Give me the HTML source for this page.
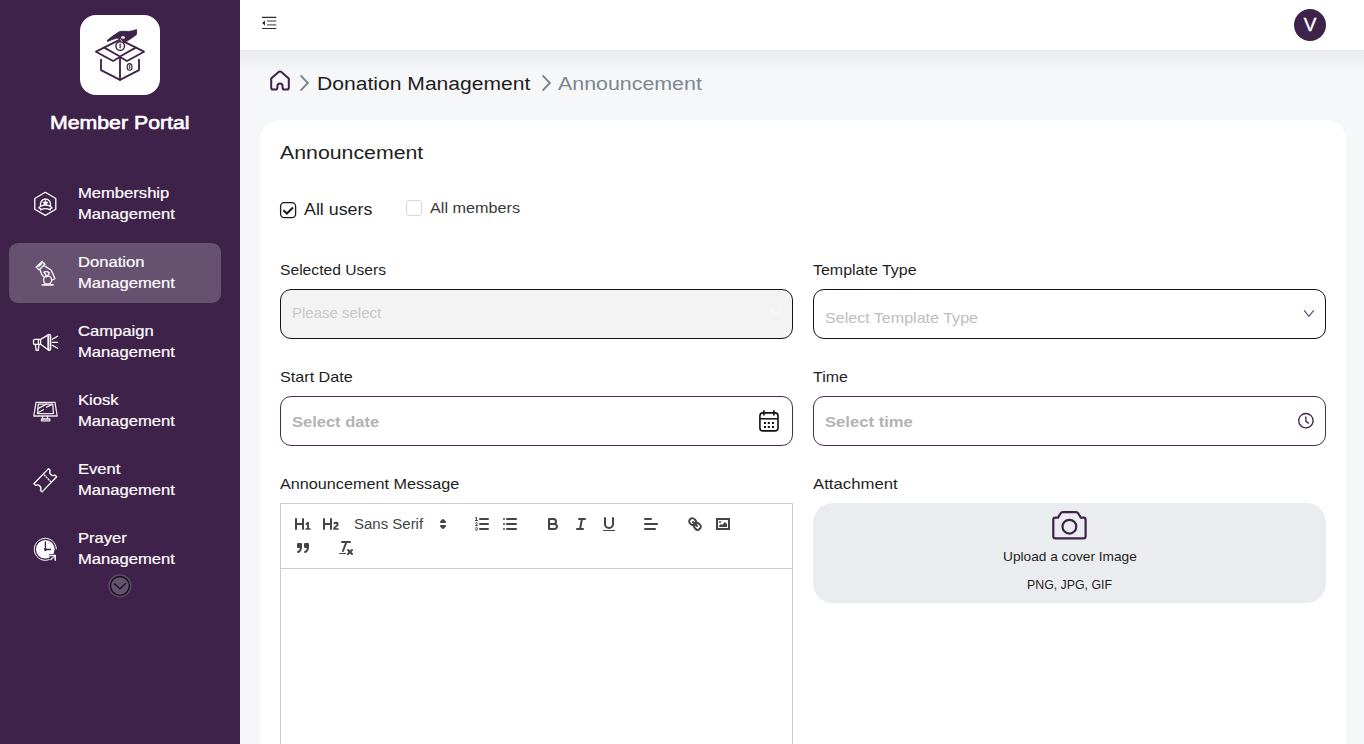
<!DOCTYPE html>
<html><head><meta charset="utf-8">
<style>
*{box-sizing:border-box;margin:0;padding:0}
html,body{width:1364px;height:744px;overflow:hidden;font-family:"Liberation Sans",sans-serif;background:#f6f7f9}
.abs{position:absolute;white-space:nowrap}
svg{position:absolute;overflow:visible}
#side{position:absolute;left:0;top:0;width:240px;height:744px;background:#3f2249}
#logo{position:absolute;left:80px;top:15px;width:80px;height:80px;background:#fff;border-radius:16px}
#brand{position:absolute;left:50px;top:112px;color:#fff;font-weight:normal;font-size:18px;line-height:22px;white-space:nowrap;transform:scaleX(1.182);transform-origin:0 0;-webkit-text-stroke:0.6px #fff}
.nav{position:absolute;left:9px;width:212px;height:60px;border-radius:9px}
.nav.active{background:#665270}
.nav .t{position:absolute;left:69px;top:8px;color:#fff;font-size:15px;line-height:21px;white-space:nowrap;transform:scaleX(1.106);transform-origin:0 0;-webkit-text-stroke:0.2px #fff}
.ic{fill:none;stroke:#fff;stroke-width:1.3;stroke-linecap:round;stroke-linejoin:round}
#hdr{position:absolute;left:240px;top:0;width:1124px;height:50px;background:#fff}
#hshadow{position:absolute;left:240px;top:50px;width:1124px;height:22px;background:linear-gradient(#eaebee,#f6f7f9)}
#avatar{position:absolute;left:1294px;top:9px;width:32px;height:32px;border-radius:50%;background:#3f2249;color:#fff;font-size:19px;line-height:32px;text-align:center;-webkit-text-stroke:0.35px #fff}
#card{position:absolute;left:260px;top:120px;width:1086px;height:700px;background:#fff;border-radius:20px}
.lbl{position:absolute;color:#1e1e1e;font-size:15px;line-height:18px;white-space:nowrap}
.box{position:absolute;border:1px solid #141417;border-radius:11px;background:#fff}
.ph{position:absolute;color:#bdbdbd;font-size:15px;line-height:18px;white-space:nowrap}
.qs{fill:none;stroke:#444;stroke-width:2;stroke-linecap:round;stroke-linejoin:round}
.qt{fill:none;stroke:#444;stroke-width:1;stroke-linecap:round;stroke-linejoin:round}
.qf{fill:#444}
</style></head><body>
<div id="side">
  <div id="logo"></div>
  <!-- logo icon -->
  <svg width="80" height="80" style="left:80px;top:15px" viewBox="0 0 80 80">
    <g fill="none" stroke="#3f2249" stroke-width="1.85" stroke-linejoin="round" stroke-linecap="round">
      <path d="M16,36.7 L40,24.7 L64,36.7 L47,46 L40,42 L33,46 Z"/>
      <path d="M24.3,32.6 L40,41.5 L55.7,32.6"/>
      <path d="M21,44.7 V55.2 L40,64.8 L59,55.2 V44.7"/>
      <path d="M40,42 V64.8"/>
      <ellipse cx="49.6" cy="51.9" rx="2.5" ry="3.3" stroke-width="1.1"/><path d="M49.6,50 V53.6 M50.4,50.6 Q49,49.9 48.8,51.2 Q50.4,51.9 50.2,52.9 L48.9,53" stroke-width="0.6"/>
    </g>
    <circle cx="40.2" cy="31.1" r="4.3" fill="#fff" stroke="#3f2249" stroke-width="1.4"/>
    <path d="M40.2,28.6 V33.6 M41.3,29.6 Q40,28.9 39.3,29.8 Q39.8,31 41,31.3 Q41.4,32.5 39.2,32.6" fill="none" stroke="#3f2249" stroke-width="0.7"/>
    <path d="M26.9,25.7 Q33,20.5 39.6,16.6 Q44,16 48.5,16.4 Q53,16.2 56.5,14.6 L56.5,19.6 Q51,23.8 46.4,26.4 L43.4,27.6 Q41.3,26.6 40.4,24.8 Q38.9,23 36.9,23.1 Q31.5,24.5 27.8,26.4 Z" fill="#3f2249" stroke="#3f2249" stroke-width="0.9" stroke-linejoin="round"/>
    <ellipse cx="43" cy="22.5" rx="2.1" ry="1.3" fill="#fff"/>
    <path d="M40.6,24.4 L42.1,26.6" fill="none" stroke="#fff" stroke-width="0.8" stroke-linecap="round"/>
  </svg>
  <div id="brand">Member Portal</div>
  <div class="nav" style="top:174px"><div class="t">Membership<br>Management</div></div>
  <div class="nav active" style="top:243px"><div class="t">Donation<br>Management</div></div>
  <div class="nav" style="top:312px"><div class="t">Campaign<br>Management</div></div>
  <div class="nav" style="top:381px"><div class="t">Kiosk<br>Management</div></div>
  <div class="nav" style="top:450px"><div class="t">Event<br>Management</div></div>
  <div class="nav" style="top:519px"><div class="t">Prayer<br>Management</div></div>

  <!-- membership icon -->
  <svg width="30" height="30" style="left:30px;top:188px" viewBox="0 0 30 30">
    <path class="ic" d="M15.3,4.3 L25.8,10.5 V21.2 L15.3,27.4 L4.8,21.2 V10.5 Z" stroke-width="1.25"/>
    <path class="ic" d="M11,18.2 A5,5 0 1 1 20,18.2" stroke-width="1.25"/>
    <path d="M15.4,11.7 L16.4,13.7 L18.6,13.9 L17,15.4 L17.5,17.6 L15.4,16.5 L13.3,17.6 L13.8,15.4 L12.2,13.9 L14.4,13.7 Z" fill="#fff"/>
    <path class="ic" d="M8.7,19.9 L10.9,17.8 Q15.4,16.4 19.9,17.8 L22.2,19.9 L20.4,20.3 L20.2,21.8 Q15.4,19.6 10.6,21.8 L10.4,20.3 Z" stroke-width="1.25"/>
  </svg>
  <!-- donation icon -->
  <svg width="30" height="30" style="left:30px;top:257px" viewBox="0 0 30 30">
    <path class="ic" d="M6.1,10.1 L12.1,4.4 L14.9,7.3 L8.9,12.9 Z M8.4,9.5 L11.9,6.4" stroke-width="1.35"/>
    <path class="ic" d="M10.2,12.9 L11.5,17 Q12.4,18.8 14,19.8 M14.9,9.1 L21.3,13.3 L24.9,21.5 L22.9,22.8" stroke-width="1.35"/>
    <circle class="ic" cx="17.6" cy="23.1" r="4.1" stroke-width="1.35"/>
    <path class="ic" d="M13.9,15 Q17,13.9 19.3,15.7 Q18.6,17.9 16.4,19.9 Q15.9,17.4 13.9,15 Z" stroke-width="1.2"/>
    <path d="M11.7,27.9 H23.7" stroke="#fff" stroke-width="1.6"/>
  </svg>
  <!-- megaphone -->
  <svg width="30" height="30" style="left:30px;top:326px" viewBox="0 0 30 30">
    <rect class="ic" x="3.5" y="13.3" width="7.1" height="5.1" rx="1.2" stroke-width="1.3"/>
    <path class="ic" d="M8.4,13.5 V18.2" stroke-width="1.1"/>
    <path class="ic" d="M5.3,18.4 L6.2,24.4 H8.2 L9,18.4 M10.6,13.4 L18.7,8.6 V24.3 L10.6,18.3" stroke-width="1.3"/>
    <rect class="ic" x="18" y="8.4" width="2.6" height="15.9" rx="1.3" stroke-width="1.3"/>
    <path class="ic" d="M22.3,13.3 L27.6,10.3 M22.3,16.3 H27.6 M22.3,19.2 L27.6,22.2" stroke-width="1.3"/>
  </svg>
  <!-- kiosk -->
  <svg width="30" height="30" style="left:30px;top:395px;opacity:0.9" viewBox="0 0 30 30">
    <path class="ic" d="M6,7.3 H25 L27.2,21 H3.8 Z" stroke-width="1.2"/>
    <path class="ic" d="M8.3,9.2 H22.8 L23.4,18.6 H7.6 Z" stroke-width="1.1"/>
    <path class="ic" d="M7.8,13.6 L16.5,9.2 M7.4,18 L13.5,14.7 M16.5,12.1 L21.8,9.6" stroke-width="1.1"/>
    <path class="ic" d="M12.6,21.2 V24 H17.5 V21.2 M11.5,24 H19.8 V25.9 H11.5 Z" stroke-width="1.1"/>
  </svg>
  <!-- ticket -->
  <svg width="30" height="30" style="left:30px;top:464px" viewBox="0 0 30 30">
    <path class="ic" d="M18.5,4.6 L20.2,6.3 Q18.8,8.5 20.8,10.5 Q22.8,12.5 25,11.1 L26.7,12.8 L12.1,27.9 L10.4,26.2 Q11.8,24 9.8,22 Q7.8,20 5.6,21.4 L3.9,19.7 Z" stroke-width="1.3"/>
    <path class="ic" d="M14.3,10.9 L15,11.7 M16.2,12.9 L16.9,13.7 M18.1,14.9 L18.8,15.7 M20,16.9 L20.6,17.6" stroke-width="1.2"/>
  </svg>
  <!-- prayer clock -->
  <svg width="30" height="30" style="left:30px;top:533px" viewBox="0 0 30 30">
    <path d="M26.3,16.3 A11,11 0 1 0 22.3,24.8" fill="none" stroke="#fff" stroke-width="1"/>
    <circle cx="15.3" cy="16.3" r="9.3" fill="#fff"/>
    <path d="M15.4,8.4 V16.5 H21" fill="none" stroke="#3f2249" stroke-width="1.3"/>
    <circle cx="15.4" cy="16.5" r="1.4" fill="#3f2249"/>
    <path d="M19.4,22.6 H25.2 V27.8 M25,22.8 L20.2,27.2" fill="none" stroke="#3f2249" stroke-width="3.2"/>
    <path d="M19.6,22.6 H25.2 V27.8" fill="none" stroke="#fff" stroke-width="1.5"/>
    <path d="M24.6,23.2 L20.4,27" fill="none" stroke="#fff" stroke-width="1.1"/>
  </svg>
  <!-- chevron circle -->
  <svg width="30" height="30" style="left:105px;top:571px" viewBox="0 0 30 30">
    <circle cx="14.9" cy="14.9" r="11.6" fill="#5d4868"/>
    <circle cx="14.9" cy="14.9" r="9.4" fill="#665270" stroke="#111" stroke-width="1.3"/>
    <path d="M9.3,12.5 L14.9,17.9 L20.8,12.3" fill="none" stroke="#111" stroke-width="1.3"/>
  </svg>
</div>
<div id="hshadow"></div>
<div id="hdr"></div>
<!-- indent icon -->
<svg width="20" height="20" style="left:259px;top:13px" viewBox="0 0 20 20">
  <path d="M3,4.4 H17.3 M3,15.5 H17.3" stroke="#2c2c30" stroke-width="1.1"/>
  <path d="M8,8 H17.3 M8,11.9 H17.3" stroke="#3a3a3e" stroke-width="1"/>
  <path d="M3.1,10 L6,7.6 V12.4 Z" fill="#2c2c30"/>
</svg>
<div id="avatar">V</div>

<!-- breadcrumb -->
<svg width="24" height="24" style="left:268px;top:68px" viewBox="0 0 24 24">
  <path d="M3.2,10.6 L10.6,3.9 Q12,2.9 13.4,3.9 L20.8,10.6 V19.8 Q20.8,21.6 19,21.6 H16.4 Q14.6,21.6 14.6,19.8 V18.2 Q14.6,15.6 12,15.6 Q9.4,15.6 9.4,18.2 V19.8 Q9.4,21.6 7.6,21.6 H5 Q3.2,21.6 3.2,19.8 Z" fill="none" stroke="#3f2249" stroke-width="2" stroke-linejoin="round"/>
</svg>
<svg width="12" height="20" style="left:298px;top:73px" viewBox="0 0 12 20">
  <path d="M2.6,2.4 L9.8,10 L2.6,17.6" fill="none" stroke="#7e878e" stroke-width="2"/>
</svg>
<div class="abs" style="left:317px;top:73px;font-size:18px;line-height:22px;color:#1e1e1e;transform:scaleX(1.172);transform-origin:0 0">Donation Management</div>
<svg width="12" height="20" style="left:540px;top:73px" viewBox="0 0 12 20">
  <path d="M2.6,2.4 L9.8,10 L2.6,17.6" fill="none" stroke="#7e878e" stroke-width="2"/>
</svg>
<div class="abs" style="left:558px;top:73px;font-size:18px;line-height:22px;color:#7e878e;transform:scaleX(1.188);transform-origin:0 0">Announcement</div>

<div id="card"></div>
<div class="abs" style="left:280px;top:142px;font-size:18px;line-height:22px;color:#1e1e1e;transform:scaleX(1.183);transform-origin:0 0">Announcement</div>

<!-- checkboxes -->
<svg width="20" height="20" style="left:278px;top:200px" viewBox="0 0 20 20">
  <rect x="2.6" y="2.6" width="15" height="15" rx="3.6" fill="#fff" stroke="#1a1a1e" stroke-width="1.3"/>
  <path d="M5.4,10.3 L8.9,13.6 L15,7.6" fill="none" stroke="#1a1a1e" stroke-width="2.1"/>
</svg>
<div class="abs" style="left:304px;top:200px;font-size:17px;line-height:20px;color:#1e1e1e;transform:scaleX(1.049);transform-origin:0 0">All users</div>
<svg width="20" height="20" style="left:404px;top:198px" viewBox="0 0 20 20">
  <rect x="2.6" y="2.5" width="15" height="15" rx="3.2" fill="#fff" stroke="#d9d9d9" stroke-width="1.1"/>
</svg>
<div class="abs" style="left:430px;top:199px;font-size:14px;line-height:18px;color:#3a3a3a;transform:scaleX(1.158);transform-origin:0 0">All members</div>

<div class="lbl" style="left:280px;top:261px;transform:scaleX(1.043);transform-origin:0 0">Selected Users</div>
<div class="box" style="left:280px;top:289px;width:513px;height:50px;background:#f3f3f3"></div>
<div class="ph" style="left:292px;top:304px;color:#c8c8c8">Please select</div>
<svg width="14" height="10" style="left:769px;top:308px" viewBox="0 0 14 10">
  <path d="M2.1,2.3 L7,7.2 L11.8,2.3" fill="none" stroke="#fff" stroke-width="1"/>
</svg>

<div class="lbl" style="left:813px;top:261px;transform:scaleX(1.065);transform-origin:0 0">Template Type</div>
<div class="box" style="left:813px;top:289px;width:513px;height:50px"></div>
<div class="ph" style="left:825px;top:309px;transform:scaleX(1.071);transform-origin:0 0">Select Template Type</div>
<svg width="14" height="10" style="left:1302px;top:308px" viewBox="0 0 14 10">
  <path d="M2.2,2.3 L6.9,8.3 L11.7,2.3" fill="none" stroke="#5b3f66" stroke-width="1.1"/>
</svg>

<div class="lbl" style="left:280px;top:368px;transform:scaleX(1.077);transform-origin:0 0">Start Date</div>
<div class="box" style="left:280px;top:396px;width:513px;height:50px;border-color:#4a2d55"></div>
<div class="ph" style="left:292px;top:413px;font-weight:bold;transform:scaleX(1.1);transform-origin:0 0;color:#b3b3b3">Select date</div>
<svg width="24" height="26" style="left:757px;top:408px" viewBox="0 0 24 26">
  <rect x="2.9" y="4.9" width="18.1" height="18" rx="3" fill="none" stroke="#111" stroke-width="1.6"/>
  <path d="M2.9,10.8 H21" stroke="#111" stroke-width="1.5"/>
  <path d="M6.9,2.2 V7.6 M16.9,2.2 V7.6" stroke="#111" stroke-width="1.6"/>
  <path d="M7,14 h2 v2 h-2 z M10.8,14 h2 v2 h-2 z M15,14 h2 v2 h-2 z M7,18 h2 v2 h-2 z M10.8,18 h2 v2 h-2 z M15,18 h2 v2 h-2 z" fill="#111"/>
</svg>

<div class="lbl" style="left:813px;top:368px;transform:scaleX(1.062);transform-origin:0 0">Time</div>
<div class="box" style="left:813px;top:396px;width:513px;height:50px;border-color:#4a2d55"></div>
<div class="ph" style="left:825px;top:413px;font-weight:bold;transform:scaleX(1.109);transform-origin:0 0;color:#b3b3b3">Select time</div>
<svg width="20" height="20" style="left:1296px;top:411px" viewBox="0 0 20 20">
  <circle cx="9.9" cy="9.7" r="7.2" fill="none" stroke="#3f2249" stroke-width="1.3"/>
  <path d="M9.9,5.4 V10.3 L13,12.6" fill="none" stroke="#3f2249" stroke-width="1.3"/>
</svg>

<div class="lbl" style="left:280px;top:475px;transform:scaleX(1.08);transform-origin:0 0">Announcement Message</div>
<div class="abs" style="left:280px;top:503px;width:513px;height:300px;border:1px solid #ccc"></div>
<div class="abs" style="left:281px;top:568px;width:511px;height:1px;background:#ccc"></div>

<!-- quill toolbar -->
<svg width="18" height="18" style="left:294px;top:515px" viewBox="0 0 18 18"><path class="qf" d="M10,4V14a1,1,0,0,1-2,0V10H3v4a1,1,0,0,1-2,0V4A1,1,0,0,1,3,4V8H8V4a1,1,0,0,1,2,0Zm6.06787,9.209H14.98975V7.59863a.54085.54085,0,0,0-.605-.60547h-.62744a1.01119,1.01119,0,0,0-.748.29688L11.645,8.56641a.5435.5435,0,0,0-.022.8584l.28613.30762a.53861.53861,0,0,0,.84717.0332l.09912-.08789a1.2137,1.2137,0,0,0,.2417-.35254h.02246s-.01123.30859-.01123.60547V13.209H12.041a.54085.54085,0,0,0-.605.60547v.43945a.54085.54085,0,0,0,.605.60547h4.02686a.54085.54085,0,0,0,.605-.60547v-.43945A.54085.54085,0,0,0,16.06787,13.209Z"/></svg>
<svg width="18" height="18" style="left:322px;top:515px" viewBox="0 0 18 18"><path class="qf" d="M16.73975,13.81445v.43945a.54085.54085,0,0,1-.605.60547H11.855a.58392.58392,0,0,1-.64893-.60547V14.0127c0-2.90527,3.39941-3.42187,3.39941-4.55469a.77675.77675,0,0,0-.84717-.78125,1.17684,1.17684,0,0,0-.83594.38477c-.2749.26367-.561.374-.85791.13184l-.4292-.34082c-.30811-.24219-.38525-.51758-.1543-.81445a2.97155,2.97155,0,0,1,2.45361-1.17676,2.45393,2.45393,0,0,1,2.68408,2.40918c0,2.45312-3.1792,2.92676-3.27832,3.93848h2.79443A.54085.54085,0,0,1,16.73975,13.81445ZM9,3A.99974.99974,0,0,0,8,4V8H3V4A1,1,0,0,0,1,4V14a1,1,0,0,0,2,0V10H8v4a1,1,0,0,0,2,0V4A.99974.99974,0,0,0,9,3Z"/></svg>
<div class="abs" style="left:354px;top:516px;font-size:14px;line-height:16px;color:#444;transform:scaleX(1.07);transform-origin:0 0">Sans Serif</div>
<svg width="18" height="18" style="left:434px;top:515px" viewBox="0 0 18 18"><polygon class="qs" points="7 11 9 13 11 11 7 11"/><polygon class="qs" points="7 7 9 5 11 7 7 7"/></svg>
<svg width="18" height="18" style="left:473px;top:515px" viewBox="0 0 18 18"><line class="qs" x1="7" x2="15" y1="4" y2="4"/><line class="qs" x1="7" x2="15" y1="9" y2="9"/><line class="qs" x1="7" x2="15" y1="14" y2="14"/><line class="qt" x1="2.5" x2="4.5" y1="5.5" y2="5.5"/><path class="qf" d="M3.5,6A0.5,0.5,0,0,1,3,5.5V3.085l-0.276.138A0.5,0.5,0,0,1,2.053,3c-0.124-.247-0.023-0.324.224-0.447l1-.5A0.5,0.5,0,0,1,4,2.5v3A0.5,0.5,0,0,1,3.5,6Z"/><path class="qt" d="M4.5,10.5h-2c0-.234,1.85-1.076,1.85-2.234A0.959,0.959,0,0,0,2.5,8.156"/><path class="qt" d="M2.5,14.846a0.959,0.959,0,0,0,1.85-.109A0.7,0.7,0,0,0,3.75,14a0.688,0.688,0,0,0,.6-0.736,0.959,0.959,0,0,0-1.85-.109"/></svg>
<svg width="18" height="18" style="left:501px;top:515px" viewBox="0 0 18 18"><line class="qs" x1="6" x2="15" y1="4" y2="4"/><line class="qs" x1="6" x2="15" y1="9" y2="9"/><line class="qs" x1="6" x2="15" y1="14" y2="14"/><line class="qs" x1="3" x2="3" y1="4" y2="4"/><line class="qs" x1="3" x2="3" y1="9" y2="9"/><line class="qs" x1="3" x2="3" y1="14" y2="14"/></svg>
<svg width="18" height="18" style="left:544px;top:515px" viewBox="0 0 18 18"><path class="qs" d="M5,4H9.5A2.5,2.5,0,0,1,12,6.5v0A2.5,2.5,0,0,1,9.5,9H5A0,0,0,0,1,5,9V4A0,0,0,0,1,5,4Z"/><path class="qs" d="M5,9h5.5A2.5,2.5,0,0,1,13,11.5v0A2.5,2.5,0,0,1,10.5,14H5a0,0,0,0,1,0,0V9A0,0,0,0,1,5,9Z"/></svg>
<svg width="18" height="18" style="left:572px;top:515px" viewBox="0 0 18 18"><line class="qs" x1="7" x2="13" y1="4" y2="4"/><line class="qs" x1="5" x2="11" y1="14" y2="14"/><line class="qs" x1="8" x2="10" y1="14" y2="4"/></svg>
<svg width="18" height="18" style="left:600px;top:515px" viewBox="0 0 18 18"><path class="qs" d="M5,3V9a4.012,4.012,0,0,0,4,4H9a4.012,4.012,0,0,0,4-4V3"/><rect class="qf" height="1" rx="0.5" ry="0.5" width="12" x="3" y="15"/></svg>
<svg width="18" height="18" style="left:642px;top:515px" viewBox="0 0 18 18"><line class="qs" x1="3" x2="15" y1="9" y2="9"/><line class="qs" x1="3" x2="13" y1="14" y2="14"/><line class="qs" x1="3" x2="9" y1="4" y2="4"/></svg>
<svg width="18" height="18" style="left:686px;top:515px" viewBox="0 0 18 18"><line class="qs" x1="7" x2="11" y1="7" y2="11"/><path class="qs" d="M8.9,4.577a3.476,3.476,0,0,1,.36,4.679A3.476,3.476,0,0,1,4.577,8.9C3.185,7.5,2.035,6.4,4.217,4.217S7.5,3.185,8.9,4.577Z"/><path class="qs" d="M13.423,9.1a3.476,3.476,0,0,0-4.679-.36,3.476,3.476,0,0,0,.36,4.679c1.392,1.392,2.5,2.542,4.679.36S14.815,10.5,13.423,9.1Z"/></svg>
<svg width="18" height="18" style="left:714px;top:515px" viewBox="0 0 18 18"><rect class="qs" height="10" width="12" x="3" y="4" style="stroke-linejoin:miter"/><circle class="qf" cx="6" cy="7" r="1"/><polyline class="qf" points="5 12 5 11 7 9 8 10 11 7 13 9 13 12 5 12"/></svg>
<svg width="18" height="18" style="left:294px;top:539px" viewBox="0 0 18 18"><rect class="qs" style="fill:#444" height="3" width="3" x="4" y="5"/><rect class="qs" style="fill:#444" height="3" width="3" x="11" y="5"/><path class="qs" d="M7,8c0,4.031-3,5-3,5"/><path class="qs" d="M14,8c0,4.031-3,5-3,5"/></svg>
<svg width="18" height="18" style="left:337px;top:539px" viewBox="0 0 18 18"><line class="qs" x1="5" x2="13" y1="3" y2="3"/><line class="qs" x1="6" x2="9.35" y1="12" y2="3"/><line class="qs" x1="11" x2="15" y1="11" y2="15"/><line class="qs" x1="15" x2="11" y1="11" y2="15"/><rect class="qf" x="2" y="14" width="7" height="1" rx="0.5" ry="0.5"/></svg>

<div class="lbl" style="left:813px;top:475px;transform:scaleX(1.116);transform-origin:0 0">Attachment</div>
<div class="abs" style="left:813px;top:503px;width:513px;height:100px;background:#ebecf0;border-radius:20px"></div>
<svg width="40" height="34" style="left:1049px;top:508px" viewBox="0 0 40 34">
  <path d="M4.3,11.8 Q4.3,9.6 6.5,9.6 H9 L11.3,5.8 Q12.2,4.2 14,4.2 H26.8 Q28.6,4.2 29.5,5.8 L31.8,9.6 H34.4 Q36.6,9.6 36.6,11.8 V28.2 Q36.6,30.4 34.4,30.4 H6.5 Q4.3,30.4 4.3,28.2 Z" fill="none" stroke="#3f2249" stroke-width="2.2" stroke-linejoin="round"/>
  <circle cx="20.4" cy="18.7" r="6.9" fill="none" stroke="#3f2249" stroke-width="2.2"/>
</svg>
<div class="abs" style="left:1003px;top:549px;font-size:13px;line-height:16px;color:#1e1e1e;transform:scaleX(1.052);transform-origin:0 0">Upload a cover Image</div>
<div class="abs" style="left:1027px;top:577px;font-size:12px;line-height:16px;color:#1e1e1e;transform:scaleX(1.028);transform-origin:0 0">PNG, JPG, GIF</div>
</body></html>
